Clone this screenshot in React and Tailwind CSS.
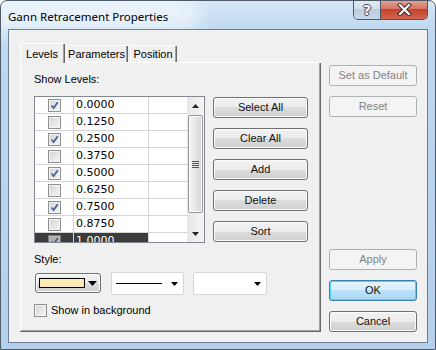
import React from 'react';

const levels = [
  { value: '0.0000', on: true },
  { value: '0.1250', on: false },
  { value: '0.2500', on: true },
  { value: '0.3750', on: false },
  { value: '0.5000', on: true },
  { value: '0.6250', on: false },
  { value: '0.7500', on: true },
  { value: '0.8750', on: false },
  { value: '1.0000', on: true, selected: true },
];

const ui = { fontFamily: '"Liberation Sans", Arial, sans-serif' };

// Win7 style check box
const CheckBox = ({ checked, dim }) => (
  <span
    className={`w-[13px] h-[13px] shrink-0 border border-[#8e8f8f] flex items-center justify-center bg-[linear-gradient(135deg,#d4d4d4,#f6f6f6)] shadow-[inset_0_0_0_1px_#f4f4f4] ${dim ? 'opacity-70' : ''}`}
  >
    {checked && (
      <svg width="9" height="9" viewBox="0 0 9 9">
        <path d="M1.5 4.5 L3.6 7 L7.8 1.2" fill="none" stroke="#4d62a0" strokeWidth="1.8" />
      </svg>
    )}
  </span>
);

const Button = ({ children, disabled, isDefault, className = '' }) => {
  let look = 'border-[#707070] bg-[linear-gradient(#f2f2f2,#ebebeb_50%,#dddddd_50%,#cfcfcf)] shadow-[inset_0_0_0_1px_#fbfbfb] text-[#111]';
  if (disabled) look = 'border-[#adb2b5] bg-[#f4f4f4] text-[#838383]';
  if (isDefault)
    look = 'border-[#3c7fb1] bg-[linear-gradient(#e5f4fc,#d7eefb_50%,#bde3f8_50%,#a9d7f3)] shadow-[inset_0_0_0_1px_#52d4f9] text-[#111]';
  return (
    <div
      className={`h-[21px] w-full rounded-[3px] border flex items-center justify-center text-[11px] ${look} ${className}`}
      style={ui}
    >
      {children}
    </div>
  );
};

const Triangle = ({ up, size = 7, color = '#000' }) => (
  <svg width={size} height={Math.ceil(size / 2)} viewBox={`0 0 ${size} ${Math.ceil(size / 2)}`}>
    {up ? (
      <path d={`M0 ${Math.ceil(size / 2)} L${size / 2} 0 L${size} ${Math.ceil(size / 2)} Z`} fill={color} />
    ) : (
      <path d={`M0 0 L${size} 0 L${size / 2} ${Math.ceil(size / 2)} Z`} fill={color} />
    )}
  </svg>
);

const LevelList = () => (
  <div className="w-[171px] h-[147px] border border-[#828790] bg-white flex">
    <div className="flex-1 overflow-hidden">
      {levels.map((l) => (
        <div
          key={l.value}
          className={`h-[17px] flex border-b border-[#d4d4d4] ${l.selected ? 'text-white' : 'text-black'}`}
        >
          <div className={`w-[39px] border-r border-[#d4d4d4] flex items-center justify-center ${l.selected ? 'bg-[#3c3c3c]' : ''}`}>
            <CheckBox checked={l.on} dim={l.selected} />
          </div>
          <div
            className={`w-[75px] border-r border-[#d4d4d4] pl-[2px] flex items-center text-[11px] ${l.selected ? 'bg-[#3c3c3c]' : ''}`}
            style={{ fontFamily: '"DejaVu Sans", Verdana, sans-serif' }}
          >
            {l.value}
          </div>
        </div>
      ))}
    </div>
    {/* scroll bar */}
    <div className="w-[17px] h-full flex flex-col bg-[linear-gradient(90deg,#e6e6e6,#f6f6f6)]">
      <div className="h-[17px] flex items-center justify-center">
        <Triangle up size={7} color="#222" />
      </div>
      <div className="flex-1 px-[1px] pt-[1px]">
        <div className="h-[98px] rounded-[2px] border border-[#979797] bg-[linear-gradient(90deg,#f4f4f4,#e8e8e8_45%,#d4d4d4)] shadow-[inset_0_0_0_1px_#fafafa] flex items-center justify-center">
          <div className="flex flex-col gap-[1px]">
            <div className="w-[7px] h-[1px] bg-[#555]" />
            <div className="w-[7px] h-[1px] bg-[#555]" />
            <div className="w-[7px] h-[1px] bg-[#555]" />
            <div className="w-[7px] h-[1px] bg-[#555]" />
          </div>
        </div>
      </div>
      <div className="h-[17px] flex items-center justify-center">
        <Triangle size={7} color="#222" />
      </div>
    </div>
  </div>
);

const Tab = ({ label, active, className = '' }) => (
  <div
    className={`border-l border-t border-white rounded-t-[2px] bg-[#f0f0f0] flex ${
      active ? 'h-[20px] -mb-[1px] relative z-10' : 'h-[17px]'
    } ${className}`}
  >
    <div className="flex-1 border-r border-[#a0a0a0] flex items-center justify-center text-[11px] text-black pt-[1px]" style={ui}>
      {label}
    </div>
    <div className="w-[1px] bg-[#696969]" />
  </div>
);

export default function App() {
  return (
    <div className="w-[436px] h-[350px] overflow-hidden bg-[#ffffff]">
      <div className="w-[436px] h-[350px] rounded-t-[7px] border border-[#4f5b69] bg-[linear-gradient(180deg,#d4e6f7_0px,#bed8f1_30px,#b5d0ec_100%)] relative overflow-hidden">
        {/* title glow */}
        <div className="absolute left-[-20px] top-[-6px] w-[220px] h-[40px] rounded-full bg-white/60 blur-[10px]" />
        {/* title bar */}
        <div className="h-[28px] flex justify-between relative">
          <div
            className="pl-[7px] pt-[7px] text-[11.5px] text-black"
            style={{ fontFamily: '"Segoe UI", "Noto Sans", sans-serif' }}
          >
            Gann Retracement Properties
          </div>
          <div className="mr-[7px] h-[20px] -mt-[1px] flex border border-t-0 border-[#4a5869] rounded-b-[5px] overflow-hidden">
            <div className="w-[27px] h-full bg-[linear-gradient(#e4ecf5,#d2dfec_45%,#bccde0_50%,#c6d6e6)] flex items-center justify-center border-r border-[#4a5869]">
              <span
                className="text-[14px] font-bold text-white leading-none"
                style={{
                  fontFamily: '"DejaVu Sans", sans-serif',
                  textShadow: '1px 0 #39495c,-1px 0 #39495c,0 1px #39495c,0 -1px #39495c',
                }}
              >
                ?
              </span>
            </div>
            <div className="w-[46px] h-full bg-[linear-gradient(#e8a597,#d67866_45%,#c5432b_50%,#d2644c)] flex items-center justify-center">
              <svg width="15" height="13" viewBox="0 0 15 13">
                <path d="M3 2 L12 11 M12 2 L3 11" stroke="#40282a" strokeWidth="4.2" strokeLinecap="square" />
                <path d="M3 2 L12 11 M12 2 L3 11" stroke="#ffffff" strokeWidth="2.2" strokeLinecap="square" />
              </svg>
            </div>
          </div>
        </div>

        {/* client area */}
        <div className="ml-[7px] w-[420px] h-[314px] border border-[#6e7f92] bg-[#f0f0f0] relative flex pl-[11px] pt-[13px]" style={ui}>
          {/* tabs + panel */}
          <div className="w-[301px] flex flex-col">
            <div className="h-[19px] flex items-end">
              <Tab label="Levels" active className="w-[45px]" />
              <Tab label="Parameters" className="w-[62px] ml-[1px]" />
              <Tab label="Position" className="w-[47px] ml-[2px]" />
            </div>
            <div className="h-[269px] border-l border-t border-white flex">
              <div className="flex-1 border-r border-b border-[#a0a0a0] pl-[13px] pt-[10px]">
                <div className="text-[11px] leading-[13px] text-black">Show Levels:</div>
                <div className="mt-[10px] flex">
                  <LevelList />
                  <div className="ml-[8px] w-[95px] mt-[1px] flex flex-col gap-[10px]">
                    <Button>Select All</Button>
                    <Button>Clear All</Button>
                    <Button>Add</Button>
                    <Button>Delete</Button>
                    <Button>Sort</Button>
                  </div>
                </div>
                <div className="mt-[10px] text-[11px] leading-[13px] text-black">Style:</div>
                <div className="mt-[6px] h-[23px] flex items-start">
                  <div className="ml-[1px] mt-[1px] w-[66px] h-[20px] rounded-[3px] border border-[#707070] bg-[linear-gradient(#f2f2f2,#ebebeb_50%,#dddddd_50%,#cfcfcf)] shadow-[inset_0_0_0_1px_#fbfbfb] flex items-center pl-[3px]">
                    <div className="w-[46px] h-[10px] border border-black bg-[#fde9b6]" />
                    <div className="ml-[3px]">
                      <Triangle size={9} />
                    </div>
                  </div>
                  <div className="ml-[10px] w-[73px] h-[23px] rounded-[2px] border border-[#d6d6d6] bg-white flex items-center pl-[4px] pr-[5px]">
                    <div className="w-[46px] h-[1px] bg-black" />
                    <div className="ml-auto">
                      <Triangle size={7} />
                    </div>
                  </div>
                  <div className="ml-[9px] w-[74px] h-[23px] rounded-[2px] border border-[#d6d6d6] bg-white flex items-center pr-[5px]">
                    <div className="ml-auto">
                      <Triangle size={7} />
                    </div>
                  </div>
                </div>
                <div className="mt-[7px] flex items-center gap-[4px]">
                  <CheckBox />
                  <span className="text-[11px] text-black">Show in background</span>
                </div>
              </div>
              <div className="w-[1px] bg-[#696969] self-stretch" />
            </div>
            <div className="h-[1px] w-[301px] bg-[#696969]" />
          </div>

          {/* right column */}
          <div className="ml-[8px] w-[88px] flex flex-col">
            <Button disabled className="mt-[22px]">Set as Default</Button>
            <Button disabled className="mt-[10px]">Reset</Button>
            <Button disabled className="mt-[132px]">Apply</Button>
            <Button isDefault className="mt-[10px]">OK</Button>
            <Button className="mt-[10px]">Cancel</Button>
          </div>
        </div>
      </div>
    </div>
  );
}
